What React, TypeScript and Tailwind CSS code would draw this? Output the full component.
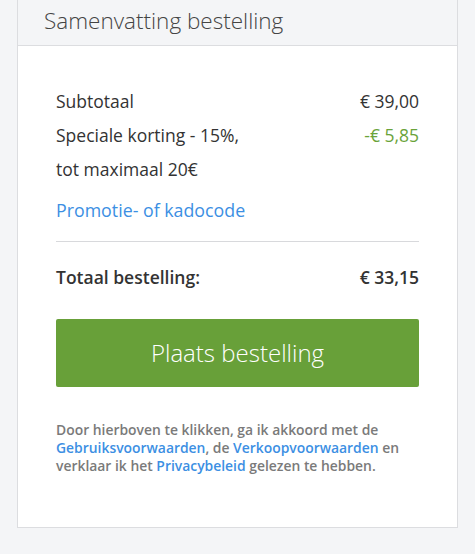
export default function App() {
  return (
    <div className="min-h-screen bg-[#f4f5f7] pl-[17px] font-['Open_Sans',sans-serif] text-[#333]">
      <div className="w-[441px] border-x border-b border-[#dcdde0] bg-white">
        {/* header */}
        <div className="flex h-[46px] items-end border-b border-[#dcdde0] bg-[#f4f5f7] pb-[13px] pl-[26px]">
          <h2 className="text-[22.5px] font-light leading-none text-[#444]">
            Samenvatting bestelling
          </h2>
        </div>

        <div className="px-[38px] pt-[38px] pb-[52px]">
          <div className="text-[17.5px] leading-[34px]">
            <div className="flex justify-between">
              <span>Subtotaal</span>
              <span>€ 39,00</span>
            </div>
            <div className="flex justify-between">
              <span>
                Speciale korting - 15%,
                <br />
                tot maximaal 20€
              </span>
              <span className="text-[#6aa33a]">-€ 5,85</span>
            </div>
          </div>

          <a href="#" className="mt-[12px] block text-[17.8px] leading-[24px] text-[#3c8fe3]">
            Promotie- of kadocode
          </a>

          <div className="mt-[19px] border-t border-[#d8d9dc]" />

          <div className="mt-[23px] flex justify-between text-[17.5px] font-semibold leading-[24px]">
            <span>Totaal bestelling:</span>
            <span>€ 33,15</span>
          </div>

          <button className="mt-[30px] h-[68px] w-full rounded-[2px] bg-[#68a039] text-[24px] font-light text-white">
            Plaats bestelling
          </button>

          <p className="mt-[34px] text-[13.9px] font-semibold leading-[18px] text-[#7a7a7a]">
            Door hierboven te klikken, ga ik akkoord met de{" "}
            <a href="#" className="text-[#3c8fe3]">Gebruiksvoorwaarden</a>, de{" "}
            <a href="#" className="text-[#3c8fe3]">Verkoopvoorwaarden</a> en verklaar ik het{" "}
            <a href="#" className="text-[#3c8fe3]">Privacybeleid</a> gelezen te hebben.
          </p>
        </div>
      </div>
    </div>
  );
}
